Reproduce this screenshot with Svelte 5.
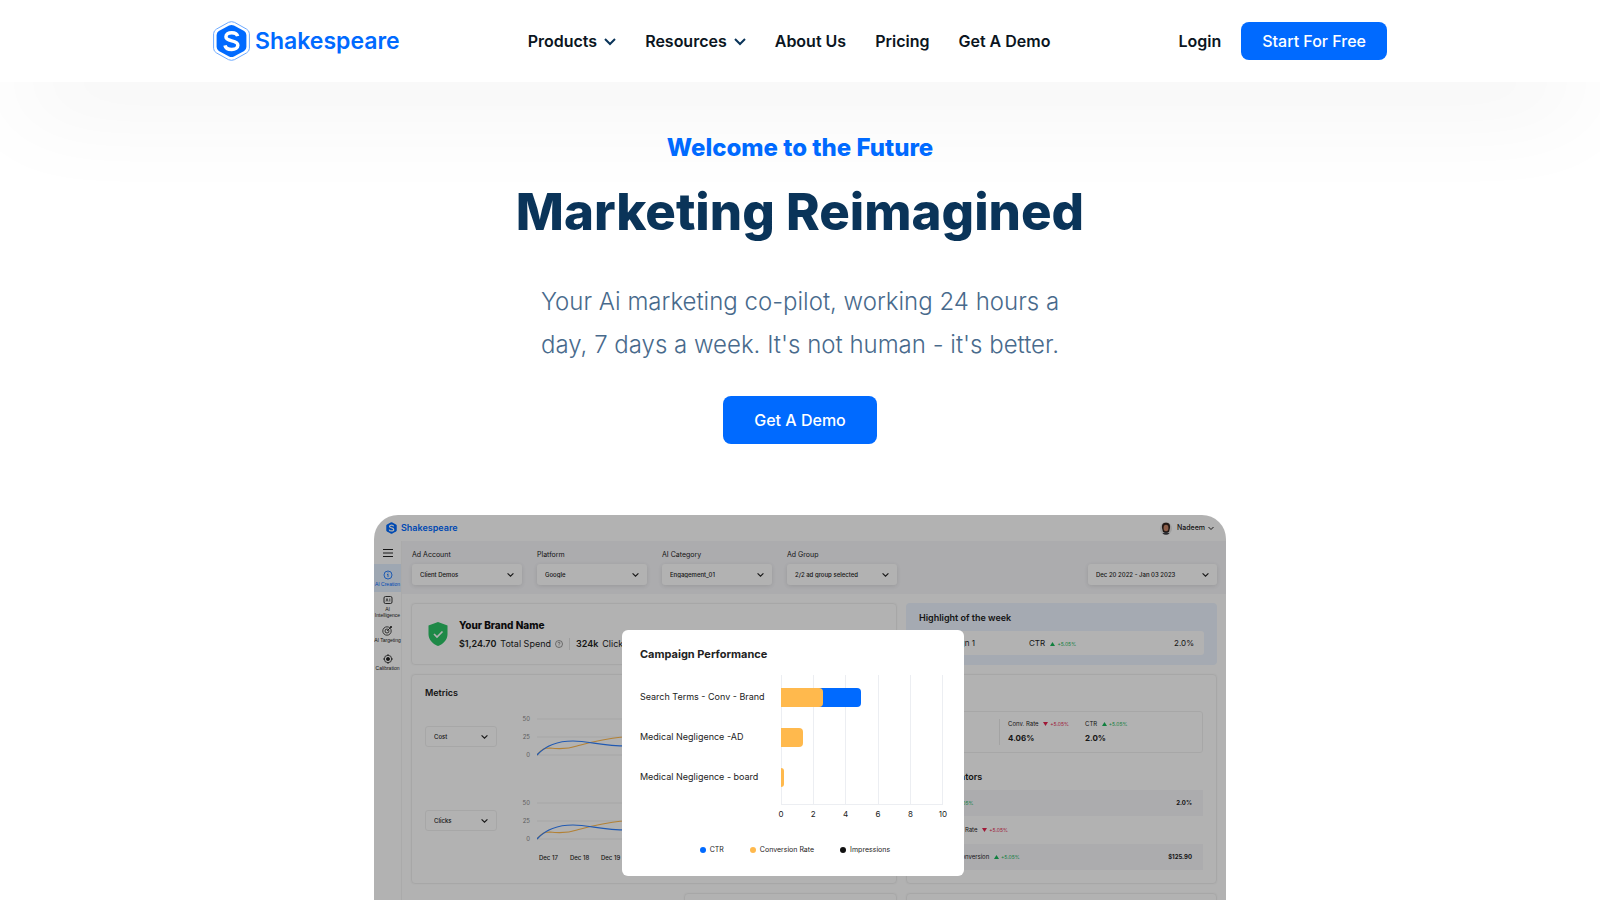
<script lang="ts">
  interface NavItem {
    label: string;
    menu?: boolean;
  }

  const nav: NavItem[] = [
    { label: 'Products', menu: true },
    { label: 'Resources', menu: true },
    { label: 'About Us' },
    { label: 'Pricing' },
    { label: 'Get A Demo' },
  ];

  const filters = [
    { id: 'account', label: 'Ad Account', value: 'Client Demos' },
    { id: 'platform', label: 'Platform', value: 'Google' },
    { id: 'category', label: 'AI Category', value: 'Engagement_01' },
    { id: 'group', label: 'Ad Group', value: '2/2 ad group selected' },
  ];

  const metrics = [
    { name: 'Cost', dates: false },
    { name: 'Clicks', dates: true },
  ];
  const dates = ['Dec 17', 'Dec 18', 'Dec 19', 'Dec 20', 'Dec 21', 'Dec 22', 'Dec 23', 'Dec 24', 'Dec 25', 'Dec 26', 'Dec 27'];

  const indicators = [
    { label: 'CTR', up: true, value: '2.0%' },
    { label: 'Conversion Rate', up: false, value: '' },
    { label: 'Cost Per Conversion', up: true, value: '$125.90' },
  ];

  // campaign chart, values on a 0-10 scale
  const campaigns = [
    { name: 'Search Terms - Conv - Brand', ctr: 5, rate: 2.6 },
    { name: 'Medical Negligence -AD', ctr: 0, rate: 1.4 },
    { name: 'Medical Negligence - board', ctr: 0, rate: 0.2 },
  ];
  const ticks = [0, 2, 4, 6, 8, 10];
  const legend = [
    { label: 'CTR', color: '#006aff' },
    { label: 'Conversion Rate', color: '#ffb94d' },
    { label: 'Impressions', color: '#111' },
  ];
</script>

{#snippet chevron(size: number)}
  <svg class="chev" width={size} height={size} viewBox="0 0 12 12" aria-hidden="true">
    <path d="M1 4 6 9l5-5" fill="none" stroke="currentColor" stroke-width="2" />
  </svg>
{/snippet}

{#snippet delta(up: boolean)}
  <span class="delta" class:down={!up}>
    <svg width="5" height="4" viewBox="0 0 5 4" aria-hidden="true">
      <path d={up ? 'M2.5 0 5 4H0z' : 'M0 0h5L2.5 4z'} fill="currentColor" />
    </svg>
    +5.05%
  </span>
{/snippet}

{#snippet mark(w: number, h: number, ring: boolean)}
  <svg width={w} height={h} viewBox={ring ? '0 0 38 41' : '3 3 32 35'} aria-hidden="true">
    {#if ring}
      <path
        d="M16 1.3Q19 0 22 1.3L34.5 8.3Q37.3 10 37.4 13V28Q37.3 31 34.5 32.7L22 39.7Q19 41 16 39.7L3.5 32.7Q.7 31 .6 28V13Q.7 10 3.5 8.3z"
        fill="none" stroke="#6aa8ff" stroke-width="1"
      />
    {/if}
    <path
      d="M16.5 4.5Q19 3.4 21.5 4.5L32 10.3Q34.3 11.8 34.3 14.3V26.7Q34.3 29.2 32 30.7L21.5 36.5Q19 37.6 16.5 36.5L6 30.7Q3.7 29.2 3.7 26.7V14.3Q3.7 11.8 6 10.3z"
      fill="#006aff"
    />
    <path
      d="M25.3 15.5C24.6 12.8 22 12 19.3 12 15.8 12 13.3 13.6 13.3 16.2 13.3 22 25.5 18.7 25.5 24.8 25.5 27.6 22.7 29.2 19.3 29.2 15.7 29.2 12.9 27.9 12.3 24.9"
      fill="none" stroke="#fff" stroke-width="3.6"
    />
  </svg>
{/snippet}

<div class="page">
  <header>
    <div class="bar">
      <a class="brand" href="#home">
        {@render mark(37, 40, true)}
        <span>Shakespeare</span>
      </a>
      <nav>
        {#each nav as item}
          <a href="#{item.label}">
            {item.label}
            {#if item.menu}{@render chevron(12)}{/if}
          </a>
        {/each}
      </nav>
      <div class="account">
        <a href="#login">Login</a>
        <button class="cta small">Start For Free</button>
      </div>
    </div>
  </header>

  <main>
    <p class="eyebrow">Welcome to the Future</p>
    <h1>Marketing Reimagined</h1>
    <p class="lead">Your Ai marketing co-pilot, working 24 hours a day, 7 days a week. It's not human - it's better.</p>
    <button class="cta">Get A Demo</button>

    <section class="shot" aria-label="Dashboard preview">
      <div class="top">
        <div class="mini-brand">{@render mark(11, 12, false)} Shakespeare</div>
        <div class="user">
          <svg width="12" height="13" viewBox="0 0 12 13" aria-hidden="true">
            <ellipse cx="6" cy="6.5" rx="6" ry="6.5" fill="#e6e6e6" />
            <path d="M2 6C1.5 2 3.5.8 6 .8S10.5 2 10 6L9 10H3z" fill="#33241f" />
            <ellipse cx="6" cy="6" rx="2.4" ry="3.2" fill="#c98667" />
            <path d="M2.5 11.5Q6 8 9.5 11.5 6 14 2.5 11.5z" fill="#3f3f46" />
          </svg>
          <span>Nadeem</span>
          {@render chevron(6)}
        </div>
      </div>

      <div class="body">
        <aside>
          <svg class="burger" width="10" height="10" viewBox="0 0 10 10" aria-hidden="true">
            <path d="M0 1.5h10M0 5h10M0 8.5h10" stroke="#222" />
          </svg>
          <div class="side active">
            <svg width="10" height="10" viewBox="0 0 10 10" fill="none" stroke="currentColor" stroke-width=".8" aria-hidden="true">
              <circle cx="5" cy="5" r="4" /><path d="M5 4.2v2.8M4 4.5h1M5 2.5v.8" />
            </svg>
            <span>AI Creation</span>
          </div>
          <div class="side">
            <svg width="10" height="10" viewBox="0 0 10 10" fill="none" stroke="currentColor" stroke-width=".9" aria-hidden="true">
              <rect x="1" y="1.5" width="8" height="7" rx="1.5" /><path d="m3 6.5 1-3 1 3M6.8 3.5v3" stroke-width=".7" />
            </svg>
            <span>AI<br />Intelligence</span>
          </div>
          <div class="side">
            <svg width="11" height="11" viewBox="0 0 11 11" fill="none" stroke="currentColor" stroke-width=".8" aria-hidden="true">
              <circle cx="5" cy="6" r="4.2" /><circle cx="5" cy="6" r="2" /><path d="m5 6 5-5M8.5 1v1.5H10" />
            </svg>
            <span>AI Targeting</span>
          </div>
          <div class="side">
            <svg width="10" height="10" viewBox="0 0 10 10" fill="none" stroke="currentColor" stroke-width=".8" aria-hidden="true">
              <circle cx="5" cy="5" r="3.7" /><circle cx="5" cy="5" r="1.6" fill="currentColor" /><path d="M5 0v1.5M5 8.5V10M0 5h1.5M8.5 5H10" />
            </svg>
            <span>Calibration</span>
          </div>
        </aside>

        <div class="content">
          <div class="filters">
            {#each filters as f (f.id)}
              <div class="filter">
                <label for={f.id}>{f.label}</label>
                <div class="pick">
                  <select id={f.id}><option>{f.value}</option></select>
                  {@render chevron(7)}
                </div>
              </div>
            {/each}
            <div class="pick range">
              <select aria-label="Date range"><option>Dec 20 2022 - Jan 03 2023</option></select>
              {@render chevron(7)}
            </div>
          </div>

          <div class="cards">
            <div class="card summary">
              <svg width="20" height="24" viewBox="0 0 20 24" aria-hidden="true">
                <path d="M10 0 19.5 3.5V12C19.5 18 15 22 10 24 5 22 .5 18 .5 12V3.5z" fill="#2bc466" />
                <path d="m6 12 3 3 5.5-5.5" fill="none" stroke="#fff" stroke-width="1.7" />
              </svg>
              <div>
                <h2>Your Brand Name</h2>
                <div class="totals">
                  <b>$1,24.70</b> Total Spend
                  <svg width="8" height="8" viewBox="0 0 8 8" fill="none" stroke="#555" stroke-width=".6" aria-hidden="true">
                    <circle cx="4" cy="4" r="3.5" /><path d="M3 3.2Q3 2.2 4 2.2T5 3.2Q4 4 4 4.8M4 5.5v.6" />
                  </svg>
                  <i></i>
                  <b>324k</b> Clicks
                </div>
              </div>
            </div>

            <div class="card highlight">
              <h3>Highlight of the week</h3>
              <div class="week">
                <span>Campaign 1</span>
                <span>CTR {@render delta(true)}</span>
                <span>2.0%</span>
              </div>
            </div>

            <div class="card metrics">
              <h3>Metrics</h3>
              {#each metrics as m (m.name)}
                <div class="metric">
                  <div class="pick flat">
                    <select aria-label="Metric"><option>{m.name}</option></select>
                    {@render chevron(7)}
                  </div>
                  <div class="scale"><span>50</span><span>25</span><span>0</span></div>
                  <div class="plot">
                    <svg width="340" height="40" viewBox="0 0 340 40" fill="none" aria-hidden="true">
                      <path d="M0 2h340M0 20h340M0 38h340" stroke="#eee" />
                      <path d="M0 38C5 32 7 31 13 31 22 32 31 32 40 29 55 25 65 22 85 20 130 14 180 30 340 8" stroke="#ffb94d" stroke-width="1.2" />
                      <path d="M0 38C10 27 23 24 36 24 52 24 65 29 90 29 140 30 200 10 340 28" stroke="#2f80ff" stroke-width="1.2" />
                    </svg>
                    {#if m.dates}
                      <div class="dates">{#each dates as d}<span>{d}</span>{/each}</div>
                    {/if}
                  </div>
                </div>
              {/each}
            </div>

            <div class="card results">
              <h3>Results</h3>
              <div class="stats">
                <div class="stat">Cost<b>$125.90</b></div>
                <div class="stat ruled">Conv. Rate {@render delta(false)}<b>4.06%</b></div>
                <div class="stat">CTR {@render delta(true)}<b>2.0%</b></div>
              </div>
              <h3>Key Indicators</h3>
              {#each indicators as row (row.label)}
                <div class="row">
                  <span>{row.label} {@render delta(row.up)}</span>
                  <b>{row.value}</b>
                </div>
              {/each}
            </div>
          </div>

          <div class="more">
            <div class="card blank"></div>
            <div class="card"></div>
            <div class="card"></div>
          </div>
        </div>
      </div>

      <div class="shade"></div>
      <div class="modal">
        <h2>Campaign Performance</h2>
        <div class="chart">
          <div class="names">{#each campaigns as c}<span>{c.name}</span>{/each}</div>
          <div class="graph">
            <div class="bars">
              {#each campaigns as c}
                <div class="track">
                  <div class="fill ctr" style="width: {c.ctr * 10}%"></div>
                  <div class="fill" style="width: {c.rate * 10}%"></div>
                </div>
              {/each}
            </div>
            <div class="ticks">{#each ticks as t}<span>{t}</span>{/each}</div>
          </div>
        </div>
        <div class="legend">
          {#each legend as l}
            <span><i style="background: {l.color}"></i>{l.label}</span>
          {/each}
        </div>
      </div>
    </section>
  </main>
</div>

<style>
  :global(body) { margin: 0; background: #fff; }
  .page { height: 100vh; overflow: hidden; font-family: Inter, "Liberation Sans", sans-serif; color: #0b1521; }
  .page * { box-sizing: border-box; }
  h1, h2, h3, p { margin: 0; }
  a { color: inherit; text-decoration: none; }
  svg { flex: none; }

  header { height: 82px; background: #fff; box-shadow: 0 40px 100px -20px rgba(0, 0, 0, 0.08); }
  .bar {
    display: flex; align-items: center; justify-content: space-between;
    max-width: 1174px; height: 100%; margin: 0 auto;
  }
  .brand { display: flex; align-items: center; gap: 5px; color: #006aff; font-size: 23px; font-weight: 600; }
  nav { display: flex; gap: 29px; font-size: 16px; font-weight: 600; }
  nav a { display: flex; align-items: center; gap: 7px; }
  nav .chev { color: #0a3459; }
  .account { display: flex; align-items: center; gap: 20px; font-size: 16px; font-weight: 600; }
  .cta {
    height: 48px; padding: 0 31px; border: 0; border-radius: 8px; cursor: pointer;
    background: #006aff; color: #fff; font: 500 16px Inter, "Liberation Sans", sans-serif;
  }
  .cta.small { height: 38px; padding: 0 21px; }

  main { position: relative; display: flex; flex-direction: column; align-items: center; padding-top: 48px; }
  .eyebrow { color: #006aff; font-size: 24px; line-height: 36px; font-weight: 800; }
  h1 { margin-top: 12px; color: #0a3459; font-size: 51px; line-height: 68px; font-weight: 800; }
  .lead {
    max-width: 540px; margin: 34px 0 30px; text-align: center;
    color: #486a8c; font-size: 24px; line-height: 43px; font-weight: 300;
  }

  /* product shot */
  .shot {
    position: relative; width: 852px; max-width: 100%; margin-top: 71px; overflow: hidden;
    border-radius: 24px 24px 0 0; background: #fff; color: #222; font-size: 7px; line-height: 10px;
  }
  .top { display: flex; align-items: center; justify-content: space-between; height: 26px; padding: 0 12px; }
  .mini-brand { display: flex; align-items: center; gap: 4px; color: #006aff; font-size: 9px; font-weight: 600; }
  .user { display: flex; align-items: center; gap: 5px; font-weight: 500; }
  .user .chev { margin-left: -2px; }
  .body { display: flex; }
  aside {
    width: 28px; flex: none; border-right: 1px solid #f4f4f4; text-align: center;
    font-family: "Liberation Sans", sans-serif; font-size: 5px; line-height: 6px; white-space: nowrap;
  }
  .burger { display: block; margin: 7px auto 6px; }
  .side { display: flex; flex-direction: column; align-items: center; justify-content: center; gap: 1px; height: 28px; }
  .side.active { background: #e2efff; color: #006aff; }
  .content { flex: 1; min-width: 0; }
  .filters { display: flex; gap: 15px; height: 53px; padding: 9px 9px 0 10px; background: #f7f7fa; }
  .filter { width: 110px; }
  .filter label { display: block; margin-bottom: 4px; }
  .pick {
    position: relative; display: flex; align-items: center; height: 21px; border-radius: 3px;
    background: #fff; box-shadow: 0 1px 5px rgba(0, 0, 0, 0.12);
  }
  .pick select {
    appearance: none; width: 100%; height: 100%; padding: 0 16px 0 8px; border: 0; background: none;
    color: #222; font: 500 6px Inter, "Liberation Sans", sans-serif;
  }
  .pick .chev { position: absolute; right: 8px; pointer-events: none; }
  .range { width: 129px; margin: 14px 0 0 auto; }
  .flat { width: 72px; height: 21px; border: 1px solid #f0f0f0; box-shadow: none; }

  .cards { display: grid; grid-template-columns: 486fr 311fr; gap: 9px; padding: 9px; }
  .card { border: 1px solid #f0f0f0; border-radius: 4px; box-shadow: 0 0 2px rgba(0, 0, 0, 0.06); }
  .card h3 { font-size: 9px; line-height: 12px; font-weight: 600; }
  .summary { display: flex; align-items: center; gap: 11px; height: 62px; padding: 0 16px; }
  .summary h2 { font-size: 10px; line-height: 14px; font-weight: 800; color: #111; }
  .totals { display: flex; align-items: center; gap: 4px; margin-top: 5px; font-size: 9px; line-height: 14px; }
  .totals b { font-weight: 600; }
  .totals i { width: 1px; height: 12px; margin: 0 2px; background: #e4e4e4; }
  .highlight { height: 62px; padding: 9px 13px; border: 0; background: #ecf4ff; box-shadow: none; }
  .week {
    display: grid; grid-template-columns: 98px 1fr auto; height: 24px; margin-top: 7px; padding: 0 10px 0 12px;
    align-items: center; border-radius: 3px; background: #fff; font-size: 8px;
  }
  .delta { display: inline-flex; align-items: center; gap: 2px; margin-left: 3px; color: #18b85a; font-size: 5px; line-height: 8px; }
  .delta.down { color: #e5234f; }
  .metrics { height: 210px; padding: 12px 13px; overflow: hidden; }
  .metric { display: grid; grid-template-columns: 72px 33px 1fr; height: 84px; padding-top: 16px; }
  .metric .flat { margin-top: 11px; }
  .scale {
    display: flex; flex-direction: column; justify-content: space-between; height: 44px;
    color: #888; font-size: 6px; line-height: 8px; text-align: right;
  }
  .plot { padding: 2px 0 0 7px; overflow: hidden; }
  .plot svg { display: block; }
  .dates { display: flex; gap: 13px; padding: 13px 0 0 2px; font-size: 6px; line-height: 8px; font-weight: 500; white-space: nowrap; }
  .dates span { width: 18px; flex: none; }
  .results { height: 210px; padding: 12px 13px; }
  .stats {
    display: grid; grid-template-columns: 78px 78px 1fr; height: 42px; margin: 12px 0 18px; padding: 7px 0;
    border: 1px solid #f0f0f0; border-radius: 3px;
  }
  .stat { padding-left: 8px; white-space: nowrap; font-size: 6px; }
  .stat.ruled { border-left: 1px solid #eaeaea; }
  .stat b { display: block; margin-top: 4px; font-size: 8px; font-weight: 700; }
  .row { display: flex; align-items: center; justify-content: space-between; height: 26px; margin-top: 1px; padding: 0 11px; font-size: 6px; }
  .row:nth-of-type(even) { background: #f6f6fa; }
  h3 + .row { margin-top: 7px; }
  .more { display: grid; grid-template-columns: 264fr 213fr 311fr; gap: 9px; padding: 0 9px 9px; }
  .more .card { height: 120px; }
  .more .blank { visibility: hidden; }

  .shade { position: absolute; inset: 0; background: rgba(0, 0, 0, 0.3); }
  .modal {
    position: absolute; top: 115px; left: 29.1%; width: 342px; height: 246px; padding: 17px 21px 0 18px;
    border-radius: 6px; background: #fff;
  }
  .modal h2 { font-size: 11px; line-height: 14px; font-weight: 700; }
  .chart { display: flex; justify-content: space-between; margin-top: 14px; }
  .names { display: flex; flex-direction: column; padding-top: 2px; font-size: 9px; line-height: 40px; white-space: nowrap; }
  .graph { width: 162px; }
  .bars {
    height: 130px; padding-top: 13px; border-right: 1px solid #eceef2; border-bottom: 1px solid #eceef2;
    background: repeating-linear-gradient(90deg, #eceef2 0 1px, transparent 1px 20%);
  }
  .track { display: grid; height: 19px; margin-bottom: 21px; }
  .fill { grid-area: 1 / 1; border-radius: 0 4px 4px 0; background: #ffb94d; }
  .fill.ctr { background: #006aff; }
  .ticks { display: flex; justify-content: space-between; margin: 3px -6px 0; font-size: 8px; line-height: 12px; text-align: center; }
  .ticks span { width: 12px; }
  .legend { display: flex; justify-content: center; gap: 26px; margin-top: 25px; padding-left: 7px; }
  .legend span { display: flex; align-items: center; gap: 4px; font-size: 7px; }
  .legend i { width: 6px; height: 6px; border-radius: 50%; }
</style>
